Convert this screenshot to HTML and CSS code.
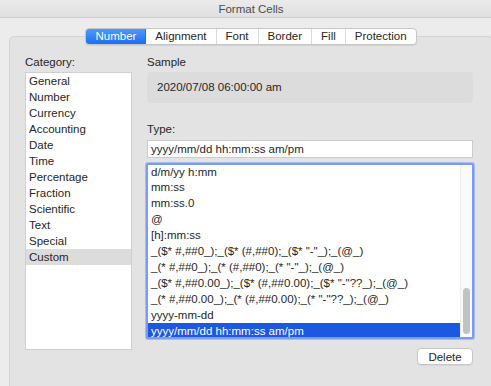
FILE: index.html
```html
<!DOCTYPE html>
<html lang="en">
<head>
    <meta charset="UTF-8">
    <title>Format Cells</title>
    <link rel="stylesheet" href="styles.css">
</head>
<body>

<div class="window">
    <div class="titlebar">Format Cells</div>

    <div class="tabs">
        <div class="tabbar">
            <div class="tab active">Number</div>
            <div class="tab">Alignment</div>
            <div class="tab">Font</div>
            <div class="tab">Border</div>
            <div class="tab">Fill</div>
            <div class="tab">Protection</div>
        </div>
    </div>

    <div class="panel">
        <!-- Category column -->
        <div class="left">
            <div class="label">Category:</div>
            <div class="cat-list">
                <div class="row">General</div>
                <div class="row">Number</div>
                <div class="row">Currency</div>
                <div class="row">Accounting</div>
                <div class="row">Date</div>
                <div class="row">Time</div>
                <div class="row">Percentage</div>
                <div class="row">Fraction</div>
                <div class="row">Scientific</div>
                <div class="row">Text</div>
                <div class="row">Special</div>
                <div class="row current">Custom</div>
            </div>
        </div>

        <!-- Format column -->
        <div class="right">
            <div class="label">Sample</div>
            <div class="sample-box">2020/07/08 06:00:00 am</div>

            <div class="label type-label">Type:</div>
            <div class="type-input">yyyy/mm/dd hh:mm:ss am/pm</div>

            <div class="type-list">
                <div class="rows">
                    <div class="row first">d/m/yy h:mm</div>
                    <div class="row">mm:ss</div>
                    <div class="row">mm:ss.0</div>
                    <div class="row">@</div>
                    <div class="row">[h]:mm:ss</div>
                    <div class="row">_($* #,##0_);_($* (#,##0);_($* "-"_);_(@_)</div>
                    <div class="row">_(* #,##0_);_(* (#,##0);_(* "-"_);_(@_)</div>
                    <div class="row">_($* #,##0.00_);_($* (#,##0.00);_($* "-"??_);_(@_)</div>
                    <div class="row">_(* #,##0.00_);_(* (#,##0.00);_(* "-"??_);_(@_)</div>
                    <div class="row">yyyy-mm-dd</div>
                    <div class="row selected">yyyy/mm/dd hh:mm:ss am/pm</div>
                </div>
                <div class="track"><div class="thumb"></div></div>
            </div>

            <div class="actions">
                <button class="btn">Delete</button>
            </div>
        </div>
    </div>
</div>

</body>
</html>
```

FILE: styles.css
```css
body {
    margin: 0;
    background: #ececec;
    color: #262626;
    font-family: 'Liberation Sans', Arial, sans-serif;
    font-size: 11.5px;
    overflow: hidden;
}
.window { width: 502px; height: 386px; overflow: hidden; }
.titlebar {
    height: 17px;
    line-height: 18px;
    text-align: center;
    color: #4d4d4d;
    background: linear-gradient(#ebebeb, #e0e0e0);
    border-bottom: 1px solid #cecece;
}

/* Tabs */
.tabs {
    display: flex;
    justify-content: center;
    margin-top: 10px;
    position: relative;
    z-index: 1;
}
.tabbar {
    display: flex;
    background: #fff;
    border: 1px solid #c6c6c6;
    border-radius: 4px;
    overflow: hidden;
    box-shadow: 0 1px 1px rgba(0, 0, 0, 0.08);
}
.tab {
    padding: 0 9px;
    line-height: 15px;
    border-right: 1px solid #dadada;
    color: #262626;
}
.tab:last-child { border-right: none; }
.tab.active {
    background: linear-gradient(#4f99fb, #1e6ff5);
    color: #fff;
    border-right-color: #1e6ff5;
}

/* Panel */
.panel {
    display: flex;
    gap: 15px;
    margin: -9px 9px 0;
    padding: 17px 15px 0;
    height: 345px;
    background: #e3e3e3;
    border: 1px solid #d4d4d4;
    border-radius: 5px;
}
.label { line-height: 16px; margin-bottom: 2px; }
.row { line-height: 16px; padding-left: 3px; white-space: pre; }

.left { width: 107px; }
.cat-list {
    height: 276px;
    background: #fff;
    border: 1px solid #cfcfcf;
}
.cat-list .row.current { background: #dcdcdc; }

.right { width: 326px; }
.sample-box {
    height: 31px;
    line-height: 31px;
    padding-left: 10px;
    background: #dcdcdc;
    border-radius: 4px;
}
.type-label { margin-top: 18px; margin-bottom: 3px; }
.type-input {
    height: 16px;
    line-height: 17px;
    padding-left: 3px;
    background: #fff;
    border: 1px solid #cbcbcb;
}

.type-list {
    display: flex;
    height: 172px;
    margin: 5px -1px 0;
    background: #fff;
    border: 2px solid #7b9cf0;
    border-radius: 2px;
    box-shadow: 0 0 0 1px rgba(123, 156, 240, 0.55);
}
.rows { flex: 1; overflow: hidden; }
.rows .row.first { line-height: 13px; padding-top: 1px; }
.rows .row.selected { background: #1c58e0; color: #fff; }
.track {
    width: 11px;
    background: #fafafa;
    border-left: 1px solid #ececec;
}
.thumb {
    width: 7px;
    height: 46px;
    margin: 123px 0 0 2px;
    background: #c2c2c2;
    border-radius: 4px;
}

.actions { display: flex; justify-content: flex-end; margin-top: 9px; }
.btn {
    width: 56px;
    height: 17px;
    padding: 0;
    font-family: 'Liberation Sans', Arial, sans-serif;
    font-size: 11.5px;
    color: #262626;
    background: #fff;
    border: 1px solid #c6c6c6;
    border-radius: 4px;
    box-shadow: 0 1px 1px rgba(0, 0, 0, 0.06);
}
```
